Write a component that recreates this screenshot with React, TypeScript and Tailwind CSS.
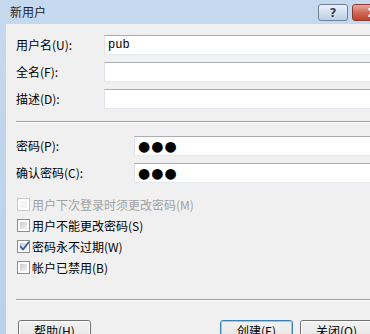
import React from "react";

// ============================================================================
// SMALL PIECES
// ============================================================================

const cjk = "font-['Noto_Sans_CJK_SC','Liberation_Sans',sans-serif]";

function TextBox({ value, password }: { value?: string; password?: boolean }) {
  return (
    <div className="flex-1 h-[20px] bg-white border border-t-[#abadb3] border-l-[#e2e3ea] border-r-[#dbdfe6] border-b-[#e3e9ef] flex items-center pl-[3px]">
      {password ? (
        <span className="font-['DejaVu_Sans',sans-serif] text-[14px] leading-none tracking-[1px] text-black">
          {value}
        </span>
      ) : (
        <span className="font-['Liberation_Mono',monospace] text-[12px] leading-none text-black">
          {value}
        </span>
      )}
    </div>
  );
}

function CheckBox({
  label,
  checked,
  disabled,
}: {
  label: string;
  checked?: boolean;
  disabled?: boolean;
}) {
  return (
    <label className="flex items-center h-[21px] gap-[2px] pl-[1px]">
      <span
        className={`w-[13px] h-[13px] border p-[2px] bg-white flex ${
          disabled ? "border-[#c9c9c9]" : "border-[#8e8f8f]"
        }`}
      >
        <span
          className={`flex-1 relative ${
            disabled
              ? "bg-[#f4f4f4]"
              : "bg-gradient-to-br from-[#c8ccd2] to-[#f4f4f5]"
          }`}
        >
          {checked && (
            <svg
              className="absolute -left-[1px] -top-[2px] w-[11px] h-[11px]"
              viewBox="0 0 11 11"
            >
              <path
                d="M1.5 5.5 L4 8.5 L9.5 1.5"
                fill="none"
                stroke="#3b56a6"
                strokeWidth={1.8}
                strokeLinecap="round"
                strokeLinejoin="round"
              />
            </svg>
          )}
        </span>
      </span>
      <span
        className={`text-[12px] leading-none ${
          disabled ? "text-[#a0a0a0]" : "text-black"
        }`}
      >
        {label}
      </span>
    </label>
  );
}

function PushButton({
  label,
  primary,
}: {
  label: string;
  primary?: boolean;
}) {
  return (
    <button
      className={`w-[73px] h-[23px] rounded-[3px] border ${
        primary ? "border-[#3c7fb1]" : "border-[#707070]"
      } bg-gradient-to-b from-[#f2f2f2] via-[#ebebeb] to-[#d6d6d6] flex`}
    >
      <span
        className={`flex-1 rounded-[2px] border ${
          primary ? "border-[#7fd4f4]" : "border-[#fcfcfc]"
        } text-[12px] leading-none text-black pt-[3px]`}
      >
        {label}
      </span>
    </button>
  );
}

function Separator() {
  return <div className="border-t border-t-[#a0a0a0] border-b border-b-white" />;
}

// ============================================================================
// DIALOG
// ============================================================================

export default function App() {
  return (
    <div className={`w-[370px] h-[334px] overflow-hidden ${cjk}`}>
      <div className="w-[400px] h-[334px] bg-gradient-to-b from-[#c5d9ef] to-[#b9d1ea] flex flex-col">
        {/* ====== TITLE BAR ====== */}
        <div className="h-[24px] flex items-start shrink-0">
          <span className="pl-[10px] pt-[6px] text-[12px] leading-none text-[#1e1e1e]">
            新用户
          </span>
          <div className="ml-auto mr-[5px] mt-[4px] flex gap-[4px]">
            <div className="w-[30px] h-[17px] rounded-[3px] border border-[#6f7f99] bg-gradient-to-b from-[#eaf1fa] via-[#d3e0f0] to-[#bccde3] flex items-center justify-center">
              <span className="font-['DejaVu_Sans',sans-serif] font-bold text-[12px] leading-none text-[#3a3f4a] [text-shadow:0_0_2px_#ffffff]">
                ?
              </span>
            </div>
            <div className="w-[43px] h-[17px] rounded-[3px] border border-[#8a3b30] bg-gradient-to-b from-[#e7a89e] via-[#d06a58] to-[#c1402c] flex items-center justify-center">
              <svg className="w-[11px] h-[9px]" viewBox="0 0 11 9">
                <path
                  d="M1.5 1 L9.5 8 M9.5 1 L1.5 8"
                  stroke="#ffffff"
                  strokeWidth={2.4}
                  strokeLinecap="round"
                />
              </svg>
            </div>
          </div>
        </div>

        {/* ====== CLIENT AREA ====== */}
        <div className="ml-[6px] mr-[6px] flex-1 bg-[#f0f0f0] px-[10px] pt-[11px] flex flex-col">
          {/* name fields */}
          <div className="flex flex-col gap-[7px]">
            <div className="flex items-center">
              <span className="w-[88px] text-[12px] leading-none text-black">
                用户名(U):
              </span>
              <TextBox value="pub" />
            </div>
            <div className="flex items-center">
              <span className="w-[88px] text-[12px] leading-none text-black">
                全名(F):
              </span>
              <TextBox />
            </div>
            <div className="flex items-center">
              <span className="w-[88px] text-[12px] leading-none text-black">
                描述(D):
              </span>
              <TextBox />
            </div>
          </div>

          <div className="mt-[12px]">
            <Separator />
          </div>

          {/* password fields */}
          <div className="mt-[13px] flex flex-col gap-[7px]">
            <div className="flex items-center">
              <span className="w-[118px] text-[12px] leading-none text-black">
                密码(P):
              </span>
              <TextBox value="●●●" password />
            </div>
            <div className="flex items-center">
              <span className="w-[118px] text-[12px] leading-none text-black">
                确认密码(C):
              </span>
              <TextBox value="●●●" password />
            </div>
          </div>

          {/* options */}
          <div className="mt-[11px] flex flex-col">
            <CheckBox label="用户下次登录时须更改密码(M)" disabled />
            <CheckBox label="用户不能更改密码(S)" />
            <CheckBox label="密码永不过期(W)" checked />
            <CheckBox label="帐户已禁用(B)" />
          </div>

          <div className="mt-[21px]">
            <Separator />
          </div>

          {/* buttons */}
          <div className="mt-[19px] flex">
            <div className="ml-[2px]">
              <PushButton label="帮助(H)" />
            </div>
            <div className="ml-auto mr-[11px] flex gap-[7px]">
              <PushButton label="创建(E)" primary />
              <PushButton label="关闭(O)" />
            </div>
          </div>
        </div>
      </div>
    </div>
  );
}
